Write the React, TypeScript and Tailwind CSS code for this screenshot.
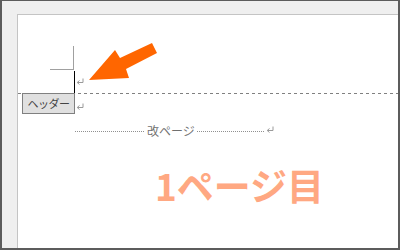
import React from "react";

const Ret = () => (
  <svg width="8" height="7" viewBox="0 0 8 7" className="block">
    <path d="M7 0.5V4.5H1.5" stroke="#9a9a9a" strokeWidth="1" fill="none" />
    <path d="M3.5 2.5L1.2 4.5L3.5 6.5" stroke="#9a9a9a" strokeWidth="1" fill="none" />
  </svg>
);

export default function App() {
  return (
    <div className="w-[400px] h-[250px] border-[#5c5c5c] border-t border-x-2 border-b-2 bg-[#efefef] pl-[15px] pt-[13px] flex overflow-hidden">
      <div className="relative flex-1 bg-white border-l border-t border-[#c4c4c4] flex flex-col">
        <div className="mt-[31px] ml-[32px] w-[24px] h-[24px] border-r border-b border-[#a0a0a0]" />
        <div className="mt-[1px] ml-[56px] h-[22px] flex">
          <div className="w-px h-full bg-black" />
          <div className="ml-[1px] mt-[7px]">
            <Ret />
          </div>
        </div>
        <div className="h-px w-full bg-[repeating-linear-gradient(to_right,#808080_0_3px,transparent_3px_6px)]" />
        <div className="-mt-px ml-[4px] flex items-start">
          <div className="w-[53px] h-[21px] border border-[#808080] bg-[#e0e0e0] flex items-center justify-center text-[11px] tracking-[-0.5px] leading-none text-[#444] font-['Noto_Sans_CJK_JP',sans-serif]">
            ヘッダー
          </div>
          <div className="ml-[1px] mt-[10px]">
            <Ret />
          </div>
        </div>
        <div className="mt-[11px] ml-[57px] flex items-center">
          <div className="w-[70px] h-px bg-[repeating-linear-gradient(to_right,#909090_0_1px,transparent_1px_2px)]" />
          <span className="px-[2px] text-[12px] leading-none text-[#707070] font-['Noto_Sans_CJK_JP',sans-serif]">
            改ページ
          </span>
          <div className="w-[68px] h-px bg-[repeating-linear-gradient(to_right,#909090_0_1px,transparent_1px_2px)]" />
          <div className="ml-[1px] -mt-[3px]">
            <Ret />
          </div>
        </div>
        <div className="mt-[30px] ml-[137px] text-[37px] leading-none font-bold text-[#ffa882] font-['Noto_Sans_CJK_JP',sans-serif] whitespace-nowrap">
          1ページ目
        </div>
        <svg
          className="absolute left-0 top-0 pointer-events-none"
          width="200"
          height="100"
          viewBox="18 15 200 100"
        >
          <polygon
            points="152,43 157,53 126,69 129,78 89,80 115,50 120,58"
            fill="#ff6600"
          />
        </svg>
      </div>
    </div>
  );
}
